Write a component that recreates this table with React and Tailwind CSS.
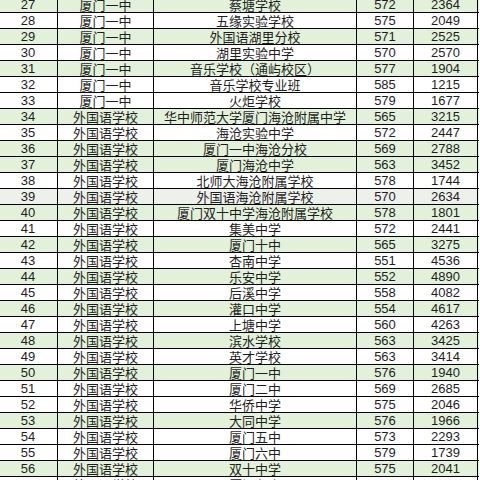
import React from 'react';

const rows = [
    [27, '厦门一中', '蔡塘学校', 572, 2364, 'g'],
    [28, '厦门一中', '五缘实验学校', 575, 2049, 'w'],
    [29, '厦门一中', '外国语湖里分校', 571, 2525, 'g'],
    [30, '厦门一中', '湖里实验中学', 570, 2570, 'w'],
    [31, '厦门一中', '音乐学校（通屿校区）', 577, 1904, 'g'],
    [32, '厦门一中', '音乐学校专业班', 585, 1215, 'w'],
    [33, '厦门一中', '火炬学校', 579, 1677, 'w'],
    [34, '外国语学校', '华中师范大学厦门海沧附属中学', 565, 3215, 'g'],
    [35, '外国语学校', '海沧实验中学', 572, 2447, 'w'],
    [36, '外国语学校', '厦门一中海沧分校', 569, 2788, 'g'],
    [37, '外国语学校', '厦门海沧中学', 563, 3452, 'g'],
    [38, '外国语学校', '北师大海沧附属学校', 578, 1744, 'w'],
    [39, '外国语学校', '外国语海沧附属学校', 570, 2634, 's'],
    [40, '外国语学校', '厦门双十中学海沧附属学校', 578, 1801, 'g'],
    [41, '外国语学校', '集美中学', 572, 2441, 'w'],
    [42, '外国语学校', '厦门十中', 565, 3275, 'g'],
    [43, '外国语学校', '杏南中学', 551, 4536, 'w'],
    [44, '外国语学校', '乐安中学', 552, 4890, 'g'],
    [45, '外国语学校', '后溪中学', 558, 4082, 'w'],
    [46, '外国语学校', '灌口中学', 554, 4617, 'g'],
    [47, '外国语学校', '上塘中学', 560, 4263, 'w'],
    [48, '外国语学校', '滨水学校', 563, 3425, 'g'],
    [49, '外国语学校', '英才学校', 563, 3414, 'w'],
    [50, '外国语学校', '厦门一中', 576, 1940, 'g'],
    [51, '外国语学校', '厦门二中', 569, 2685, 'w'],
    [52, '外国语学校', '华侨中学', 575, 2046, 'w'],
    [53, '外国语学校', '大同中学', 576, 1966, 'g'],
    [54, '外国语学校', '厦门五中', 573, 2293, 'w'],
    [55, '外国语学校', '厦门六中', 579, 1739, 'w'],
    [56, '外国语学校', '双十中学', 575, 2041, 'g'],
    [57, '外国语学校', '厦门七中', 570, 2612, 'w'],
];

const bg = { g: 'bg-[#e3f1da]', w: 'bg-white', s: 'bg-[#eef0ec]' };

const App = () => {
    return (
        <div className="w-[480px] h-[480px] overflow-hidden bg-white text-[#1e1e1e]">
            <div className="-mt-[3px] -ml-px w-[480px]">
                {rows.map(([no, school, target, score, rank, c]) => (
                    <div key={no} className={`flex h-[16px] border-b border-black ${bg[c]}`}>
                        <div className="w-[59px] border-r border-black flex items-end justify-center text-[13px] leading-[15px] font-['Liberation_Sans',sans-serif]">{no}</div>
                        <div className="w-[96px] border-r border-black flex items-end justify-center text-[13px] leading-[15px] font-['Noto_Sans_CJK_SC',sans-serif]">{school}</div>
                        <div className="w-[203px] border-r border-black flex items-end justify-center text-[13px] leading-[15px] whitespace-nowrap font-['Noto_Sans_CJK_SC',sans-serif]">{target}</div>
                        <div className="w-[57px] border-r border-black flex items-end justify-center text-[13px] leading-[15px] font-['Liberation_Sans',sans-serif]">{score}</div>
                        <div className="w-[64px] border-r border-black flex items-end justify-center text-[13px] leading-[15px] font-['Liberation_Sans',sans-serif]">{rank}</div>
                    </div>
                ))}
            </div>
        </div>
    );
};

export default App;
